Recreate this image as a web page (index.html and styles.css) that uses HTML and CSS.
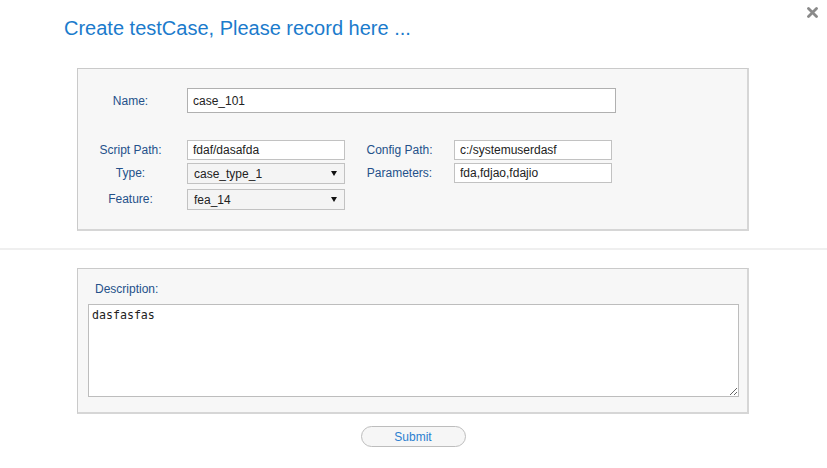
FILE: index.html
```html
<!DOCTYPE html>
<html>
<head>
<meta charset="utf-8">
<title>Create testCase</title>
<link rel="stylesheet" href="styles.css">
</head>
<body>
<div class="dialog">
  <header class="head">
    <h1 class="title">Create testCase, Please record here ...</h1>
    <button class="close" aria-label="close">
      <svg width="11" height="11" viewBox="0 0 11 11"><path d="M1.5 1.5 L9.5 9.5 M9.5 1.5 L1.5 9.5" stroke="#8a8a8a" stroke-width="2.8" stroke-linecap="round"/></svg>
    </button>
  </header>

  <section class="panel info">
    <div class="name-row">
      <label class="lbl">Name:</label>
      <input class="inp name" type="text" value="case_101">
    </div>
    <div class="fields">
      <label class="lbl">Script Path:</label>
      <input class="inp" type="text" value="fdaf/dasafda">
      <label class="lbl">Config Path:</label>
      <input class="inp" type="text" value="c:/systemuserdasf">

      <label class="lbl">Type:</label>
      <div class="sel"><select><option>case_type_1</option></select><span class="arrow"></span></div>
      <label class="lbl">Parameters:</label>
      <input class="inp" type="text" value="fda,fdjao,fdajio">

      <label class="lbl">Feature:</label>
      <div class="sel"><select><option>fea_14</option></select><span class="arrow"></span></div>
    </div>
  </section>

  <div class="divider"></div>

  <section class="panel desc">
    <label class="lbl desc-lbl">Description:</label>
    <textarea class="area">dasfasfas</textarea>
  </section>

  <div class="actions">
    <button class="submit">Submit</button>
  </div>
</div>
</body>
</html>
```

FILE: styles.css
```css
body {
  margin: 0;
  background: #fff;
  font-family: "Liberation Sans", Arial, sans-serif;
}

.dialog {
  position: relative;
  width: 827px;
  height: 468px;
}

.head {
  padding: 17px 0 0 64px;
}

.title {
  margin: 0;
  font-size: 20px;
  line-height: 23px;
  font-weight: normal;
  color: #1b7bcc;
}

.close {
  position: absolute;
  top: 7px;
  right: 9px;
  width: 11px;
  height: 11px;
  padding: 0;
  border: 0;
  background: none;
  display: block;
}

.close svg {
  display: block;
}

.panel {
  box-sizing: border-box;
  width: 672px;
  margin-left: 77px;
  background: #f7f7f7;
  border: 1px solid #cacaca;
  border-right: 2px solid #d6d6d6;
  border-bottom: 2px solid #d6d6d6;
}

.info {
  margin-top: 28px;
  padding: 19px 0 19px 0;
}

.lbl {
  font-size: 12px;
  line-height: 20px;
  color: #24518a;
  text-align: center;
}

.name-row {
  display: grid;
  grid-template-columns: 105px 429px;
  column-gap: 4px;
  align-items: center;
}

.inp {
  box-sizing: border-box;
  height: 20px;
  margin: 0;
  padding: 0 5px;
  border: 1px solid #c2c2c2;
  background: #fff;
  font-family: "Liberation Sans", Arial, sans-serif;
  font-size: 12px;
  color: #222;
  outline: none;
}

.inp.name {
  height: 25px;
  border-color: #b0b0b0;
}

.fields {
  margin-top: 27px;
  display: grid;
  grid-template-columns: 105px 158px 101px 158px;
  grid-template-rows: 23px 26px 21px;
  column-gap: 4px;
  align-items: start;
}

.sel {
  position: relative;
  height: 21px;
}

.sel select {
  box-sizing: border-box;
  width: 158px;
  height: 21px;
  margin: 0;
  padding: 0 6px;
  border: 1px solid #c2c2c2;
  border-radius: 0;
  background: #f4f4f4;
  font-family: "Liberation Sans", Arial, sans-serif;
  font-size: 12px;
  color: #222;
  appearance: none;
  -webkit-appearance: none;
  outline: none;
}

.sel .arrow {
  position: absolute;
  right: 8px;
  top: 8px;
  width: 0;
  height: 0;
  border-left: 3px solid transparent;
  border-right: 3px solid transparent;
  border-top: 5px solid #111;
  pointer-events: none;
}

.divider {
  height: 2px;
  margin-top: 17px;
  background: #efefef;
}

.desc {
  margin-top: 18px;
  padding: 10px 8px 15px 10px;
  display: flex;
  flex-direction: column;
  align-items: flex-start;
}

.desc-lbl {
  padding-left: 7px;
  text-align: left;
}

.area {
  box-sizing: border-box;
  width: 651px;
  height: 93px;
  margin: 5px 0 0 0;
  padding: 3px 3px;
  border: 1px solid #bdbdbd;
  background: #fff;
  font-family: "DejaVu Sans Mono", monospace;
  font-size: 11.6px;
  color: #222;
  outline: none;
}

.actions {
  display: flex;
  justify-content: center;
  margin-top: 12px;
}

.submit {
  box-sizing: border-box;
  width: 105px;
  height: 21px;
  margin-left: -1px;
  padding: 0;
  border: 1px solid #bdbdbd;
  border-radius: 11px;
  background: #f6f6f6;
  font-family: "Liberation Sans", Arial, sans-serif;
  font-size: 12px;
  color: #2c80d0;
}
```
